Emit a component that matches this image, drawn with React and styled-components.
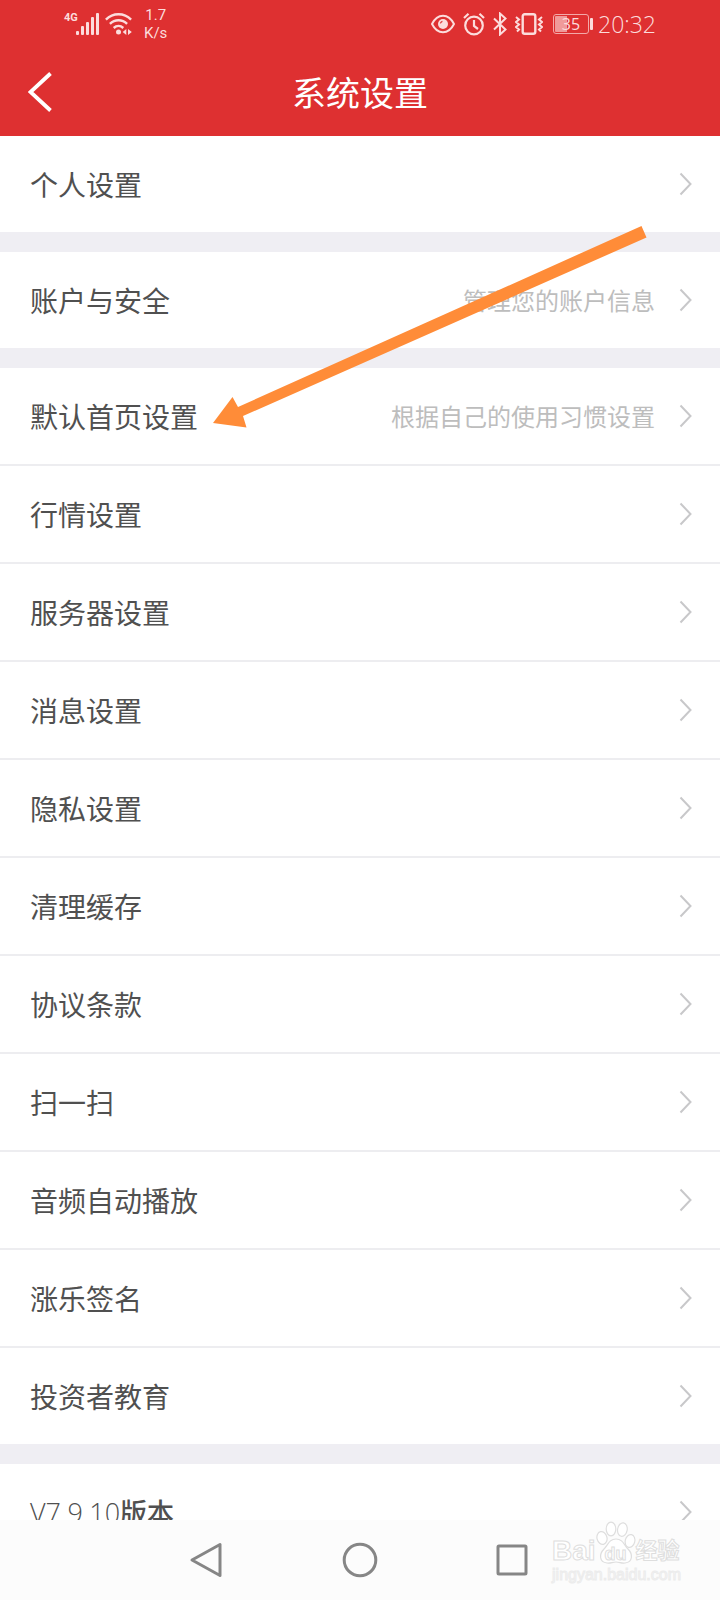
import React from 'react';
import styled, { createGlobalStyle } from 'styled-components';

const groups = [
  [{ label: '个人设置' }],
  [{ label: '账户与安全', hint: '管理您的账户信息' }],
  [
    { label: '默认首页设置', hint: '根据自己的使用习惯设置' },
    { label: '行情设置' },
    { label: '服务器设置' },
    { label: '消息设置' },
    { label: '隐私设置' },
    { label: '清理缓存' },
    { label: '协议条款' },
    { label: '扫一扫' },
    { label: '音频自动播放' },
    { label: '涨乐签名' },
    { label: '投资者教育' },
  ],
  [{ version: 'V7.9.10', label: '版本' }],
];

const SignalIcon = () => (
  <svg width='23' height='22' viewBox='0 0 23 22' fill='currentColor'>
    <rect x='0' y='18' width='3' height='4' rx='1' />
    <rect x='5' y='13' width='3' height='9' rx='1' />
    <rect x='10' y='9' width='3' height='13' rx='1' />
    <rect x='15' y='4' width='3' height='18' rx='1' />
    <rect x='20' y='0' width='3' height='22' rx='1' />
  </svg>
);

const WifiIcon = () => (
  <svg width='27' height='22' viewBox='0 0 27 22' fill='none' stroke='currentColor' strokeWidth='2.4'>
    <path d='M.9 6.6C8-.5 19-.5 26.1 6.6' />
    <path d='M4.9 10.8c5-4.8 12.2-4.8 17.2 0' />
    <path d='M8.7 15c2.9-2.7 6.7-2.7 9.6 0' />
    <circle cx='13.5' cy='19' r='2.5' fill='currentColor' stroke='none' />
    <path d='M21.3 16v6l-3.6-3zM23 16v6l3.8-3z' fill='currentColor' stroke='none' />
  </svg>
);

const EyeIcon = () => (
  <svg width='24' height='20' viewBox='0 0 24 20' fill='none' stroke='currentColor' strokeWidth='2'>
    <path d='M1 10c5.5-11 16.5-11 22 0-5.5 11-16.5 11-22 0z' strokeLinejoin='round' />
    <circle cx='12' cy='10' r='5' fill='currentColor' stroke='none' />
    <path d='M9.4 9.4a3 3 0 0 1 2-2' stroke='#de3031' strokeWidth='1.2' />
  </svg>
);

const AlarmIcon = () => (
  <svg width='22' height='24' viewBox='0 0 22 24' fill='none' stroke='currentColor' strokeWidth='2.2'>
    <circle cx='11' cy='13.5' r='8.8' />
    <path d='M11 8v6l4 3M1 6l4.5-4.3M21 6l-4.5-4.3' />
  </svg>
);

const BluetoothIcon = () => (
  <svg width='14' height='24' viewBox='0 0 14 24' fill='none' stroke='currentColor' strokeWidth='2'>
    <path d='M1 6.5l11.5 11L7 22.5v-21l5.5 5L1 17.5' />
  </svg>
);

const VibrateIcon = () => (
  <svg width='28' height='22' viewBox='0 0 28 22' fill='none' stroke='currentColor'>
    <rect x='7.7' y='1.2' width='12.6' height='19.6' rx='2' strokeWidth='2.4' />
    <path
      d='M1 4l3 2.5L1 9l3 2.5L1 14l3 2.5L2 18.5M27 4l-3 2.5L27 9l-3 2.5L27 14l-3 2.5 2 2'
      strokeWidth='2'
    />
  </svg>
);

const BackIcon = () => (
  <svg width='25' height='40' viewBox='0 0 25 40' fill='none' stroke='currentColor' strokeWidth='3.8'>
    <path d='M22.5 1.5L2.5 20l20 18.5' />
  </svg>
);

const ArrowRight = () => (
  <svg width='13' height='24' viewBox='0 0 13 24' fill='none' stroke='#c8c8ca' strokeWidth='2'>
    <path d='M1.5 1.5L11.5 12l-10 10.5' />
  </svg>
);

const Paw = () => (
  <svg width='40' height='44' viewBox='0 0 40 44' fill='#fff' stroke='#dedede' strokeWidth='1.2'>
    <ellipse cx='6' cy='17' rx='5' ry='6.5' transform='rotate(-14 6 17)' />
    <ellipse cx='15' cy='8' rx='4.8' ry='6.8' />
    <ellipse cx='26.5' cy='8.5' rx='4.8' ry='6.8' transform='rotate(10 26 8)' />
    <ellipse cx='34' cy='20' rx='4.8' ry='6.5' transform='rotate(14 34 20)' />
    <path d='M20 18c-7 0-8 6-12 10-5 5-5 13 3 14 4 .5 5-1 9-1s5 1.5 9 1c8-1 8-9 3-14-4-4-5-10-12-10z' />
  </svg>
);

const App = () => {
  return (
    <Page>
      <GlobalStyle />
      <Header>
        <StatusBar>
          <Network>4G</Network>
          <SignalIcon />
          <WifiBox>
            <WifiIcon />
          </WifiBox>
          <Speed>
            <span>1.7</span>
            <span>K/s</span>
          </Speed>
          <StatusRight>
            <EyeIcon />
            <AlarmIcon />
            <BluetoothIcon />
            <VibrateIcon />
            <Battery>
              <BatteryLevel>35</BatteryLevel>
            </Battery>
            <Clock>20:32</Clock>
          </StatusRight>
        </StatusBar>
        <TitleBar>
          <BackButton aria-label='返回'>
            <BackIcon />
          </BackButton>
          <Title>系统设置</Title>
        </TitleBar>
      </Header>
      <Content>
        {groups.map((rows, index) => (
          <Group key={index}>
            {rows.map((row) => (
              <Row key={row.label} href='#'>
                {row.version ? (
                  <Label $size={27}>
                    <Version>{row.version}</Version>
                    <strong>{row.label}</strong>
                  </Label>
                ) : (
                  <Label $size={28}>{row.label}</Label>
                )}
                {row.hint && <Hint>{row.hint}</Hint>}
                <ArrowRight />
              </Row>
            ))}
          </Group>
        ))}
        <Pointer width='434' height='202' viewBox='0 0 434 202'>
          <path d='M0 197L19.5 171 25 181 428.5 0 433.5 11.5 30 190 33.5 201.5z' fill='#ff8c38' />
        </Pointer>
      </Content>
      <BottomBar>
        <NavButton aria-label='后退'>
          <svg width='36' height='36' viewBox='0 0 36 36'>
            <path d='M31 2.5v31L3 18z' />
          </svg>
        </NavButton>
        <NavButton aria-label='主页'>
          <svg width='36' height='36' viewBox='0 0 36 36'>
            <circle cx='18' cy='18' r='15.8' />
          </svg>
        </NavButton>
        <NavButton aria-label='最近任务'>
          <svg width='36' height='36' viewBox='0 0 36 36'>
            <rect x='3' y='4' width='28' height='28' rx='1' />
          </svg>
        </NavButton>
        <Watermark>
          <Brand>
            <BrandText $size={28}>Bai</BrandText>
            <PawBox>
              <Paw />
              <PawText>du</PawText>
            </PawBox>
            <BrandText $size={22}>经验</BrandText>
          </Brand>
          <Site>jingyan.baidu.com</Site>
        </Watermark>
      </BottomBar>
    </Page>
  );
};

export default App;

const GlobalStyle = createGlobalStyle`
  * {
    box-sizing: border-box;
  }

  body {
    margin: 0;
    font-family: 'Noto Sans CJK SC', sans-serif;
  }

  svg {
    display: block;
    flex-shrink: 0;
  }

  button {
    padding: 0;
    border: none;
    background: none;
    color: inherit;
    cursor: pointer;
  }
`;

const Page = styled.div`
  display: flex;
  flex-direction: column;
  height: 100vh;
  background-color: #efeef3;
`;

const Header = styled.header`
  flex-shrink: 0;
  background-color: #de3031;
  color: #fff;
`;

const StatusBar = styled.div`
  display: flex;
  align-items: center;
  height: 48px;
  padding: 0 64px;
  color: #fcdcdc;
`;

const Network = styled.span`
  align-self: flex-start;
  width: 12px;
  margin-top: 12px;
  font: 700 11px/12px Roboto, sans-serif;
`;

const WifiBox = styled.div`
  margin: 0 12px 0 6px;
`;

const Speed = styled.div`
  display: flex;
  flex-direction: column;
  align-items: center;
  font: 400 15px/18px Roboto, sans-serif;
`;

const StatusRight = styled.div`
  display: flex;
  align-items: center;
  gap: 8px;
  margin-left: auto;
`;

const Battery = styled.div`
  position: relative;
  width: 36px;
  height: 20px;
  margin: 0 1px 0 2px;
  padding: 1px;
  border: 1px solid #f3a9a9;
  border-radius: 3px;
  background: linear-gradient(90deg, #f09a9a 12px, transparent 12px) content-box;

  &::after {
    content: '';
    position: absolute;
    top: 3px;
    right: -5px;
    width: 3px;
    height: 12px;
    border-radius: 1px;
    background-color: #fcdcdc;
  }
`;

const BatteryLevel = styled.span`
  display: block;
  text-align: center;
  font: 400 16px/16px 'Open Sans', sans-serif;
`;

const Clock = styled.span`
  font: 300 23px/28px 'Open Sans', sans-serif;
`;

const TitleBar = styled.div`
  display: grid;
  grid-template-columns: 1fr auto 1fr;
  align-items: center;
  height: 88px;
  padding: 0 28px;
`;

const BackButton = styled.button`
  justify-self: start;
`;

const Title = styled.h1`
  margin: 0;
  font-size: 34px;
  line-height: 48px;
  font-weight: 400;
`;

const Content = styled.main`
  position: relative;
  flex: 1;
  min-height: 0;
  overflow: hidden;
`;

const Group = styled.section`
  margin-bottom: 20px;
`;

const Row = styled.a`
  display: flex;
  align-items: center;
  gap: 24px;
  height: 96px;
  padding: 0 28px 0 30px;
  background-color: #fff;
  color: #505050;
  text-decoration: none;

  & + & {
    height: 98px;
    border-top: 2px solid #ededf0;
  }
`;

const Label = styled.span`
  flex: 1;
  font-size: ${(props) => props.$size}px;
  line-height: 40px;

  strong {
    font-weight: 500;
  }
`;

const Version = styled.span`
  font-family: 'Open Sans', sans-serif;
  font-weight: 300;
`;

const Hint = styled.span`
  font-size: 24px;
  line-height: 36px;
  color: #bdbdbd;
`;

const Pointer = styled.svg`
  position: absolute;
  top: 90px;
  left: 213px;
  pointer-events: none;
`;

const BottomBar = styled.nav`
  position: relative;
  display: flex;
  flex-shrink: 0;
  justify-content: center;
  align-items: center;
  gap: 16vw;
  height: 80px;
  background-color: #fcfcfc;
`;

const NavButton = styled.button`
  display: flex;
  justify-content: center;
  width: 38px;

  svg {
    fill: none;
    stroke: #868686;
    stroke-width: 3;
    stroke-linejoin: round;
  }
`;

const Watermark = styled.div`
  position: absolute;
  top: 1px;
  right: 39px;
  color: #fff;
  -webkit-text-stroke: 1px #dedede;
`;

const Brand = styled.div`
  display: flex;
  align-items: flex-end;
`;

const BrandText = styled.span`
  font-family: 'Liberation Sans', 'Noto Sans CJK SC', sans-serif;
  font-size: ${(props) => props.$size}px;
  line-height: 28px;
  font-weight: 700;
`;

const PawBox = styled.div`
  position: relative;
`;

const PawText = styled.span`
  position: absolute;
  right: 0;
  bottom: 1px;
  left: 0;
  text-align: center;
  font: 700 18px/20px 'Liberation Sans', sans-serif;
`;

const Site = styled.div`
  text-align: center;
  font: 400 16px/20px 'Liberation Sans', sans-serif;
  color: #f8f8f8;
  -webkit-text-stroke: 1px #ececec;
`;
